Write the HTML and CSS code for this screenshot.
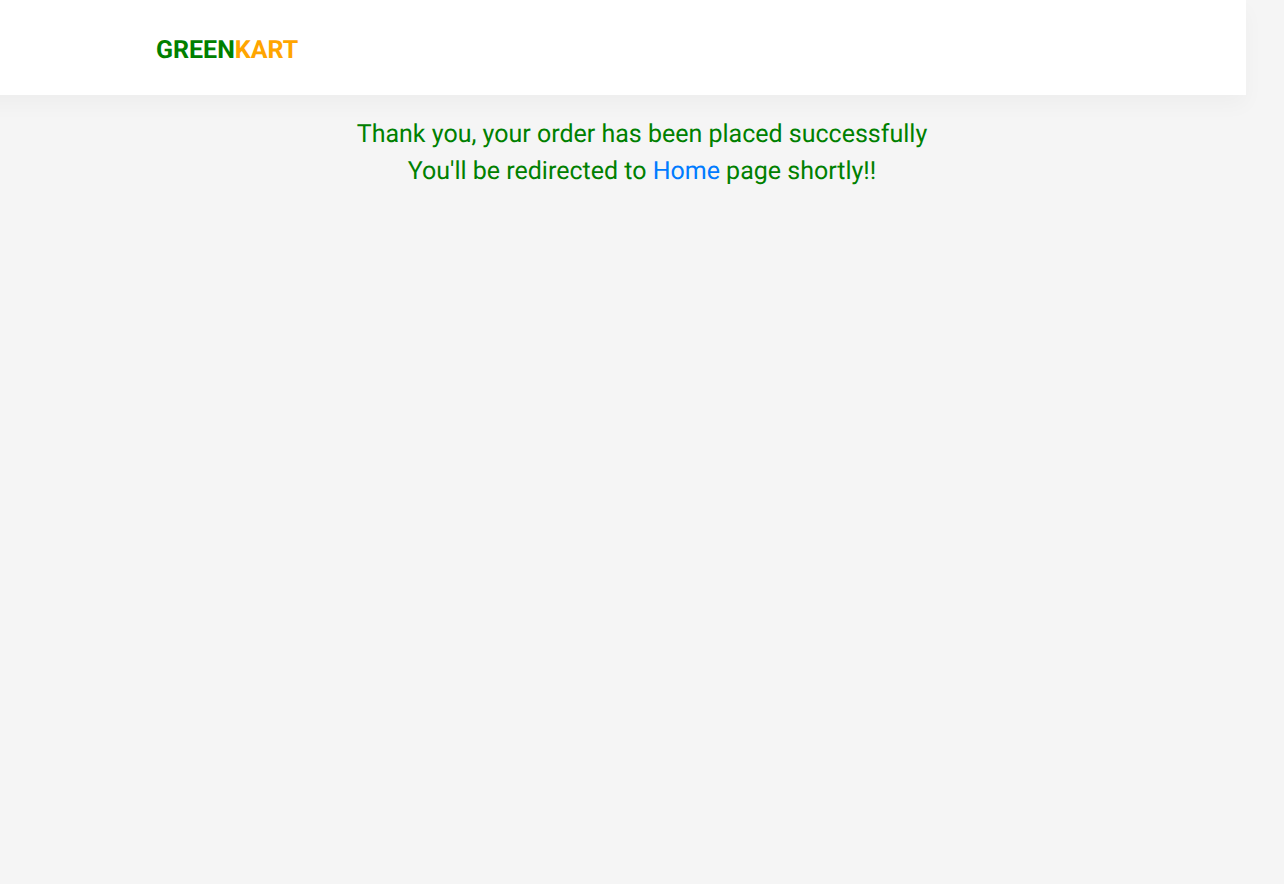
FILE: index.html
```
<!DOCTYPE html>
<html lang="en">
<head>
<meta charset="utf-8">
<title>GreenKart</title>
<link rel="stylesheet" href="styles.css">
</head>
<body>
<header class="header">
  <div class="brand">GREEN<span class="brand-accent">KART</span></div>
</header>
<main class="message">
  <p class="message-line">Thank you, your order has been placed successfully</p>
  <p class="message-line">You'll be redirected to <a class="home-link" href="#">Home</a> page shortly!!</p>
</main>
</body>
</html>
```

FILE: styles.css
```
body {
  margin: 0;
  background: #f5f5f5;
  color: green;
  font-family: Roboto, sans-serif;
  font-size: 25px;
  line-height: 37px;
  text-rendering: geometricPrecision;
}

.header {
  margin: 0 38px 0 -38px;
  padding: 32px 194px 26px;
  background: #fff;
  box-shadow: 0 10px 20px rgba(0, 0, 0, 0.03);
}

.brand {
  font-weight: 700;
}

.brand-accent {
  color: orange;
}

.message {
  padding: 21px 16px;
  text-align: center;
}

.message-line {
  margin: 0;
}

.home-link {
  color: #007bff;
  text-decoration: none;
}

.home-link:hover {
  text-decoration: underline;
}
```
